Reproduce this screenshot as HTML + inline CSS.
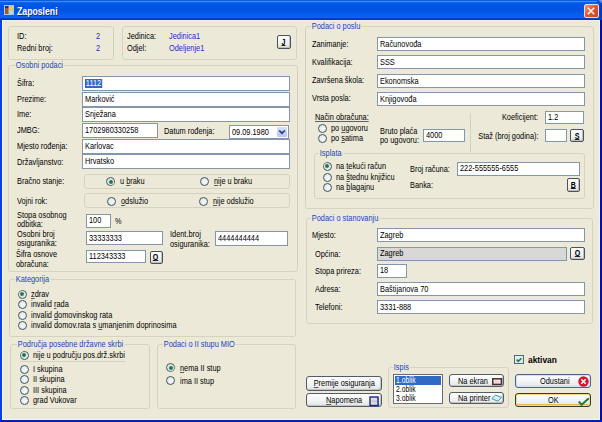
<!DOCTYPE html><html><head><meta charset="utf-8"><style>
*{box-sizing:border-box}
html,body{margin:0;padding:0}
body{width:602px;height:422px;overflow:hidden;position:relative;background:#ECE9D8;font-family:'Liberation Sans',sans-serif;font-size:9px;color:#000}
.l,.gt{position:absolute;white-space:nowrap;transform-origin:0 50%;transform:scaleX(0.82)}
.gt{color:#1844c4;background:#ECE9D8;padding:0 1px}
.g{position:absolute;border:1px solid #D5D2C0;border-radius:3px}
.tb{position:absolute;background:#fff;border:1px solid #8496ac;overflow:hidden;white-space:nowrap}
.tt{position:absolute;left:2px;top:-1px;bottom:0;display:flex;align-items:center;transform-origin:0 50%;transform:scaleX(0.82)}
.sel{background:#316AC5;color:#fff;padding:0 1px;line-height:9px}
.rd{position:absolute;width:9px;height:9px;border-radius:50%;border:1px solid #46545a;background:radial-gradient(circle at 60% 60%,#f4f8fa 0,#e6eef2 50%,#d4dee4 100%)}
.rd i{position:absolute;left:1.5px;top:1.5px;width:4px;height:4px;border-radius:50%;background:radial-gradient(#2a6a50 30%,#4a9070 100%);box-shadow:0 0 0 1px #c8ecd8}
.sb{position:absolute;border:1px solid #4a5262;border-radius:2px;background:linear-gradient(#fbfcfc,#f0f2f2 60%,#dcdcd6);display:flex;align-items:center;justify-content:center;font-weight:bold;font-size:9px;line-height:9px;box-shadow:inset -1px -1px 0 #c0c0b8}
.sb span{display:inline-block;transform:scaleX(0.78);text-decoration:underline;text-decoration-thickness:1px;text-underline-offset:0px;text-decoration-color:#222;text-decoration-skip-ink:none;margin-top:1px}
.bt{position:absolute;border:1px solid #525c68;border-radius:3px;background:linear-gradient(#fdfdfd,#f4f5f6 45%,#e8e9ea 85%,#d4d4d0);white-space:nowrap;box-shadow:inset -1px -1px 0 #c4c4c0}
u{text-decoration:underline;text-decoration-color:#606060;text-decoration-skip-ink:none}
</style></head><body><div style="position:absolute;left:0;top:0;width:602px;height:20px;background:linear-gradient(#0a5ce0 0,#0a5ce0 1px,#3a8cf8 1px,#3a8cf8 2px,#1266ee 2px,#0058e6 4px,#0053e0 10px,#0860f2 16px,#0a62f4 17.5px,#0040c8 18.5px,#0036b8 20px)"></div>
<div style="position:absolute;left:0;top:20px;width:2px;height:402px;background:#0840e8"></div>
<div style="position:absolute;left:2px;top:20px;width:1px;height:400px;background:#f4f6fc"></div>
<div style="position:absolute;left:600px;top:20px;width:2px;height:402px;background:#0010a4"></div>
<div style="position:absolute;left:599px;top:20px;width:1px;height:400px;background:#f4f6fc"></div>
<div style="position:absolute;left:0;top:420px;width:602px;height:2px;background:#0020b0"></div>
<div style="position:absolute;left:2px;top:419px;width:598px;height:1px;background:#f4f6fc"></div>
<div style="position:absolute;left:2px;top:20px;width:598px;height:1px;background:#eef2f2"></div>
<div style="position:absolute;left:599px;top:2px;width:3px;height:18px;background:linear-gradient(90deg,#0848d8,#0030b0)"></div>
<div style="position:absolute;left:597px;top:0;width:5px;height:3px;background:linear-gradient(45deg,#0a4ad8 40%,#a8c8f0 100%)"></div>
<svg width="11" height="11" style="position:absolute;left:4px;top:4.5px"><rect x="0" y="0" width="10" height="10" fill="#a8c8f4"/><rect x="1" y="1" width="3.5" height="2" fill="#22306a"/><rect x="1" y="3" width="3.5" height="6" fill="#a8552c"/><rect x="5" y="1.5" width="4" height="4" fill="#f4c848"/><rect x="5" y="6" width="4" height="3" fill="#b8d8c8"/></svg>
<div class="l" style="left:17px;top:4px;height:14px;line-height:14px;color:#fff;font-weight:bold;font-size:11px;transform:scaleX(0.79);text-shadow:1px 1px 0 #0a2a90">Zaposleni</div>
<div style="position:absolute;left:584px;top:3.7px;width:14.5px;height:14px;border:1px solid #d8e4fc;border-radius:2px;background:linear-gradient(135deg,#f49a78,#e2582c 45%,#cc4420)"><svg width="12" height="12" style="position:absolute;left:0;top:0"><path d="M2.8 2.8L9.2 9.2M9.2 2.8L2.8 9.2" stroke="#fff" stroke-width="1.5"/></svg></div>
<div class="g" style="left:8px;top:26px;width:106px;height:34px;"></div>
<div class="l" style="left:17.3px;top:30.9px;height:10px;line-height:10px;">ID:</div>
<div class="l" style="left:96px;top:30.9px;height:10px;line-height:10px;color:#2a2ac8;">2</div>
<div class="l" style="left:17.3px;top:42.7px;height:10px;line-height:10px;">Redni broj:</div>
<div class="l" style="left:96px;top:42.7px;height:10px;line-height:10px;color:#2a2ac8;">2</div>
<div class="g" style="left:122px;top:26px;width:175px;height:34px;"></div>
<div class="l" style="left:127.3px;top:30.7px;height:10px;line-height:10px;">Jedinica:</div>
<div class="l" style="left:169px;top:30.7px;height:10px;line-height:10px;color:#2a2ac8;">Jedinica1</div>
<div class="l" style="left:127.3px;top:42.5px;height:10px;line-height:10px;">Odjel:</div>
<div class="l" style="left:169px;top:42.5px;height:10px;line-height:10px;color:#2a2ac8;">Odeljenje1</div>
<div class="sb" style="left:277px;top:35px;width:14px;height:13.5px;"><span>J</span></div>
<div class="g" style="left:8px;top:65px;width:290px;height:207px;"></div>
<div class="gt" style="left:14.5px;top:59.5px;height:10px;line-height:10px;">Osobni podaci</div>
<div class="l" style="left:17px;top:77.5px;height:10px;line-height:10px;">Šifra:</div>
<div class="tb" style="left:82px;top:76px;width:208px;height:15px;"><span class="tt"><span class="sel">1112</span></span></div>
<div class="l" style="left:17px;top:93.5px;height:10px;line-height:10px;">Prezime:</div>
<div class="tb" style="left:82px;top:92px;width:208px;height:15px;"><span class="tt">Marković</span></div>
<div class="l" style="left:17px;top:109.2px;height:10px;line-height:10px;">Ime:</div>
<div class="tb" style="left:82px;top:107px;width:208px;height:15px;"><span class="tt">Snježana</span></div>
<div class="l" style="left:17px;top:125px;height:10px;line-height:10px;">JMBG:</div>
<div class="tb" style="left:82px;top:123px;width:76px;height:15px;"><span class="tt">1702980330258</span></div>
<div class="l" style="left:164px;top:126.2px;height:10px;line-height:10px;">Datum rođenja:</div>
<div class="tb" style="left:229px;top:125px;width:60px;height:14px;"><span class="tt">09.09.1980</span><div style="position:absolute;right:1px;top:1px;width:10px;height:10px;background:linear-gradient(#d4e0fc,#b6c8f4);border-radius:1px"><svg width="10" height="10" style="position:absolute;left:0;top:0"><path d="M2.2 3.5L5 6.2L7.8 3.5" stroke="#2a3a80" stroke-width="1.7" fill="none"/></svg></div></div>
<div class="l" style="left:17px;top:140.8px;height:10px;line-height:10px;">Mjesto rođenja:</div>
<div class="tb" style="left:82px;top:139px;width:208px;height:15px;"><span class="tt">Karlovac</span></div>
<div class="l" style="left:17px;top:156.5px;height:10px;line-height:10px;">Državljanstvo:</div>
<div class="tb" style="left:82px;top:154px;width:208px;height:15px;"><span class="tt">Hrvatsko</span></div>
<div class="l" style="left:17px;top:175.5px;height:10px;line-height:10px;">Bračno stanje:</div>
<div class="g" style="left:84px;top:174px;width:206px;height:15px;"></div>
<div class="rd" style="left:106.3px;top:177.1px"><i></i></div>
<div class="l" style="left:120px;top:176.1px;height:10px;line-height:10px;">u <u>b</u>raku</div>
<div class="rd" style="left:200.3px;top:177.1px"></div>
<div class="l" style="left:214px;top:176.1px;height:10px;line-height:10px;"><u>n</u>ije u braku</div>
<div class="l" style="left:17px;top:195.5px;height:10px;line-height:10px;">Vojni rok:</div>
<div class="g" style="left:84px;top:193px;width:206px;height:15px;"></div>
<div class="rd" style="left:106.5px;top:196.5px"></div>
<div class="l" style="left:121px;top:195.5px;height:10px;line-height:10px;"><u>o</u>dslužio</div>
<div class="rd" style="left:199.2px;top:196.5px"></div>
<div class="l" style="left:213px;top:195.5px;height:10px;line-height:10px;"><u>n</u>ije odslužio</div>
<div class="l" style="left:17px;top:210.3px;height:10px;line-height:10px;">Stopa osobnog</div>
<div class="l" style="left:17px;top:219.3px;height:10px;line-height:10px;">odbitka:</div>
<div class="tb" style="left:85.5px;top:214px;width:25px;height:13.5px;"><span class="tt">100</span></div>
<div class="l" style="left:115px;top:216.3px;height:10px;line-height:10px;">%</div>
<div class="l" style="left:17px;top:228.8px;height:10px;line-height:10px;">Osobni broj</div>
<div class="l" style="left:17px;top:238.2px;height:10px;line-height:10px;">osiguranika:</div>
<div class="tb" style="left:85.5px;top:231px;width:77px;height:14px;"><span class="tt">33333333</span></div>
<div class="l" style="left:170px;top:229px;height:10px;line-height:10px;">Ident.broj</div>
<div class="l" style="left:170px;top:238.8px;height:10px;line-height:10px;">osiguranika:</div>
<div class="tb" style="left:214.5px;top:231px;width:73.5px;height:14.5px;"><span class="tt">4444444444</span></div>
<div class="l" style="left:16px;top:249.2px;height:10px;line-height:10px;">Šifra osnove</div>
<div class="l" style="left:16px;top:259px;height:10px;line-height:10px;">obračuna:</div>
<div class="tb" style="left:85.5px;top:249.5px;width:60.5px;height:13.5px;"><span class="tt">112343333</span></div>
<div class="sb" style="left:149.5px;top:250.5px;width:13px;height:13.2px;"><span>O</span></div>
<div class="g" style="left:9px;top:279px;width:287px;height:58px;"></div>
<div class="gt" style="left:15px;top:273.5px;height:10px;line-height:10px;">Kategorija</div>
<div class="rd" style="left:17.5px;top:289.5px"><i></i></div>
<div class="l" style="left:31px;top:288.5px;height:10px;line-height:10px;"><u>z</u>drav</div>
<div class="rd" style="left:17.5px;top:300px"></div>
<div class="l" style="left:31px;top:299px;height:10px;line-height:10px;">invalid <u>r</u>ada</div>
<div class="rd" style="left:17.5px;top:310.5px"></div>
<div class="l" style="left:31px;top:309.5px;height:10px;line-height:10px;">invalid <u>d</u>omovinskog rata</div>
<div class="rd" style="left:17.5px;top:321px"></div>
<div class="l" style="left:31px;top:320px;height:10px;line-height:10px;">invalid domov.rata s <u>u</u>manjenim doprinosima</div>
<div class="g" style="left:10px;top:344px;width:140px;height:65px;"></div>
<div class="gt" style="left:16.5px;top:338.5px;height:10px;line-height:10px;">Područja posebne državne skrbi</div>
<div class="rd" style="left:19.5px;top:350.5px"><i></i></div>
<div class="l" style="left:33px;top:349.5px;height:10px;line-height:10px;">nije u području pos.drž.skrbi</div>
<div style="position:absolute;left:20px;top:361px;width:105px;height:1px;background:#D5D2C0"></div>
<div class="rd" style="left:19.5px;top:364.5px"></div>
<div class="l" style="left:33px;top:363.5px;height:10px;line-height:10px;">I skupina</div>
<div class="rd" style="left:19.5px;top:375.1px"></div>
<div class="l" style="left:33px;top:374.1px;height:10px;line-height:10px;">II skupina</div>
<div class="rd" style="left:19.5px;top:385.7px"></div>
<div class="l" style="left:33px;top:384.7px;height:10px;line-height:10px;">III skupina</div>
<div class="rd" style="left:19.5px;top:396.3px"></div>
<div class="l" style="left:33px;top:395.3px;height:10px;line-height:10px;">grad Vukovar</div>
<div class="g" style="left:157px;top:344px;width:139px;height:65px;"></div>
<div class="gt" style="left:163px;top:338.5px;height:10px;line-height:10px;">Podaci o II stupu MIO</div>
<div class="rd" style="left:166.1px;top:363.1px"><i></i></div>
<div class="l" style="left:180px;top:363.3px;height:10px;line-height:10px;"><u>n</u>ema II stup</div>
<div class="rd" style="left:166.1px;top:376.1px"></div>
<div class="l" style="left:180px;top:376px;height:10px;line-height:10px;">ima II stup</div>
<div class="g" style="left:305px;top:26px;width:289px;height:183px;"></div>
<div class="gt" style="left:311px;top:20.5px;height:10px;line-height:10px;">Podaci o poslu</div>
<div class="l" style="left:312px;top:38.7px;height:10px;line-height:10px;">Zanimanje:</div>
<div class="tb" style="left:377px;top:37px;width:208px;height:14px;"><span class="tt">Računovođa</span></div>
<div class="l" style="left:312px;top:56.9px;height:10px;line-height:10px;">Kvalifikacija:</div>
<div class="tb" style="left:377px;top:55px;width:208px;height:14px;"><span class="tt">SSS</span></div>
<div class="l" style="left:312px;top:75.1px;height:10px;line-height:10px;">Završena škola:</div>
<div class="tb" style="left:377px;top:74px;width:208px;height:14px;"><span class="tt">Ekonomska</span></div>
<div class="l" style="left:312px;top:93.3px;height:10px;line-height:10px;">Vrsta posla:</div>
<div class="tb" style="left:377px;top:92px;width:208px;height:14px;"><span class="tt">Knjigovođa</span></div>
<div class="l" style="left:315px;top:111.6px;height:10px;line-height:10px;"><u>Način obračuna:</u></div>
<div class="rd" style="left:317.5px;top:124px"></div>
<div class="l" style="left:331px;top:123.2px;height:10px;line-height:10px;">po <u>u</u>govoru</div>
<div class="rd" style="left:317.5px;top:134px"></div>
<div class="l" style="left:331px;top:133.2px;height:10px;line-height:10px;">po <u>s</u>atima</div>
<div class="l" style="left:380px;top:125.5px;height:10px;line-height:10px;">Bruto plaća</div>
<div class="l" style="left:380px;top:134.5px;height:10px;line-height:10px;">po ugovoru:</div>
<div class="tb" style="left:422.5px;top:128.7px;width:42px;height:13.8px;"><span class="tt">4000</span></div>
<div style="position:absolute;left:470px;top:112.5px;width:1px;height:39px;background:#D5D2C0"></div>
<div class="l" style="right:63.5px;top:112px;height:10px;line-height:10px;transform-origin:100% 50%;">Koeficijent:</div>
<div class="tb" style="left:545px;top:110.5px;width:39px;height:13px;"><span class="tt">1.2</span></div>
<div class="l" style="right:63.5px;top:130.8px;height:10px;line-height:10px;transform-origin:100% 50%;">Staž (broj godina):</div>
<div class="tb" style="left:545px;top:128.5px;width:21.7px;height:13.5px;"></div>
<div class="sb" style="left:570px;top:129px;width:14.3px;height:13px;"><span>S</span></div>
<div class="g" style="left:314px;top:153px;width:271px;height:46px;"></div>
<div class="gt" style="left:318.5px;top:147.5px;height:10px;line-height:10px;">Isplata</div>
<div class="rd" style="left:322.5px;top:161.5px"><i></i></div>
<div class="l" style="left:336px;top:160.5px;height:10px;line-height:10px;">na <u>t</u>ekući račun</div>
<div class="rd" style="left:322.5px;top:173px"></div>
<div class="l" style="left:336px;top:172px;height:10px;line-height:10px;">na <u>š</u>tednu knjižicu</div>
<div class="rd" style="left:322.5px;top:183px"></div>
<div class="l" style="left:336px;top:182px;height:10px;line-height:10px;">na <u>b</u>lagajnu</div>
<div class="l" style="left:410px;top:164px;height:10px;line-height:10px;">Broj računa:</div>
<div class="tb" style="left:457px;top:161.8px;width:123px;height:13.9px;"><span class="tt">222-555555-6555</span></div>
<div class="l" style="left:410px;top:180px;height:10px;line-height:10px;">Banka:</div>
<div class="sb" style="left:566.7px;top:178px;width:13.3px;height:13.6px;"><span>B</span></div>
<div class="g" style="left:306px;top:218px;width:287px;height:106px;"></div>
<div class="gt" style="left:310.5px;top:212.5px;height:10px;line-height:10px;">Podaci o stanovanju</div>
<div class="l" style="left:312px;top:229.9px;height:10px;line-height:10px;">Mjesto:</div>
<div class="tb" style="left:377px;top:228.3px;width:207.7px;height:14.2px;"><span class="tt">Zagreb</span></div>
<div class="l" style="left:314.5px;top:248.5px;height:10px;line-height:10px;">Općina:</div>
<div class="tb" style="left:377px;top:246.8px;width:189.6px;height:13.9px;background:#D8D8D6;"><span class="tt">Zagreb</span></div>
<div class="sb" style="left:570px;top:246.9px;width:14.7px;height:13.1px;"><span>O</span></div>
<div class="l" style="left:314.5px;top:266px;height:10px;line-height:10px;">Stopa prireza:</div>
<div class="tb" style="left:377px;top:264px;width:30px;height:13.6px;"><span class="tt">18</span></div>
<div class="l" style="left:314.5px;top:283.5px;height:10px;line-height:10px;">Adresa:</div>
<div class="tb" style="left:377px;top:282px;width:207.7px;height:14px;"><span class="tt">Baštijanova 70</span></div>
<div class="l" style="left:314.5px;top:302.3px;height:10px;line-height:10px;">Telefoni:</div>
<div class="tb" style="left:377px;top:300px;width:207.7px;height:14px;"><span class="tt">3331-888</span></div>
<div class="bt" style="left:305.5px;top:376px;width:76.5px;height:14.5px;"><div class="l" style="left:0;right:0;top:0;bottom:0;display:flex;align-items:center;justify-content:center;transform-origin:50% 50%"><u>P</u>remije osiguranja</div></div>
<div class="bt" style="left:305.5px;top:393px;width:76.5px;height:14px;"><div class="l" style="left:19px;top:0;bottom:0;display:flex;align-items:center"><u>N</u>apomena</div><svg width="11" height="11" style="position:absolute;left:62px;top:1.5px"><rect x="1" y="1" width="8" height="8.5" fill="#dcdcd8" stroke="#1c2490" stroke-width="1.4"/><path d="M2 5.2H8" stroke="#b8b8c0" stroke-width="1"/><path d="M9.5 2.5v1M9.5 5v1M9.5 7.5v1" stroke="#1c2490" stroke-width="1"/></svg></div>
<div class="g" style="left:388px;top:367px;width:121px;height:41px;"></div>
<div class="gt" style="left:392.8px;top:361.5px;height:10px;line-height:10px;">Ispis</div>
<div class="tb" style="left:392.5px;top:373.7px;width:50.5px;height:30.3px;border-color:#646c7c;"><div style="position:absolute;left:1px;top:1px;right:1px;height:9px;background:#316AC5;color:#fff;line-height:9px;padding-left:1px"><span style="display:inline-block;transform-origin:0 50%;transform:scaleX(0.75)">1.oblik</span></div><div class="l" style="left:2px;top:10.5px;line-height:9px;transform:scaleX(0.75)">2.oblik</div><div class="l" style="left:2px;top:19px;line-height:9px;transform:scaleX(0.75)">3.oblik</div></div>
<div class="bt" style="left:449.4px;top:374.2px;width:54.4px;height:12.8px;"><div class="l" style="left:7.5px;top:0;bottom:0;display:flex;align-items:center">Na ekran</div><svg width="11" height="8" style="position:absolute;left:41.5px;top:2.5px"><rect x="0.8" y="0.8" width="8.6" height="5.6" fill="#f4ece8" stroke="#4a2a2a" stroke-width="1.5"/><rect x="3" y="2.5" width="4" height="2.2" fill="#e8d0cc"/></svg></div>
<div class="bt" style="left:449.4px;top:391.7px;width:54.4px;height:12.1px;"><div class="l" style="left:7.5px;top:0;bottom:0;display:flex;align-items:center">Na printer</div><svg width="12" height="9" style="position:absolute;left:41px;top:1.2px"><path d="M0.8 4.6L4.6 1.2L10.6 3.4L6.8 7.2Z" fill="#d4f0f6" stroke="#3a9aaa" stroke-width="1"/></svg></div>
<div style="position:absolute;left:514px;top:354.7px;width:10px;height:9.5px;border:1px solid #56657a;background:linear-gradient(135deg,#e4f4f4,#d0ecec)"><svg width="8" height="8" style="position:absolute;left:0;top:0"><path d="M1.6 3.6L3.3 5.4L6.4 2.2" stroke="#2a7a4a" stroke-width="1.6" fill="none"/></svg></div>
<div class="l" style="left:527.5px;top:354.8px;height:10px;line-height:10px;font-weight:bold;transform:scaleX(0.93);">aktivan</div>
<div class="bt" style="left:515.3px;top:373.6px;width:76.2px;height:14px;border-color:#4a6490;box-shadow:inset 0 0 0 1px #d4e0f4;"><div class="l" style="left:23.5px;top:0;bottom:0;display:flex;align-items:center">Odustani</div><svg width="12" height="12" style="position:absolute;left:61.5px;top:1.5px"><circle cx="5.5" cy="5.5" r="5.2" fill="#d8142c"/><path d="M3.3 3.3L7.7 7.7M7.7 3.3L3.3 7.7" stroke="#fff" stroke-width="1.6"/></svg></div>
<div class="bt" style="left:515.3px;top:393.3px;width:76.2px;height:14.2px;border-color:#3a3a2a;box-shadow:inset 0 0 0 1px #f6d888,inset 0 -1px 0 1px #e8b850;"><div class="l" style="left:32px;top:0;bottom:0;display:flex;align-items:center">OK</div><svg width="14" height="12" style="position:absolute;left:60.5px;top:1.5px"><path d="M1.8 5.5L4.6 8.8L11.8 2.2" stroke="#2a7a3a" stroke-width="2" fill="none"/></svg></div></body></html>
